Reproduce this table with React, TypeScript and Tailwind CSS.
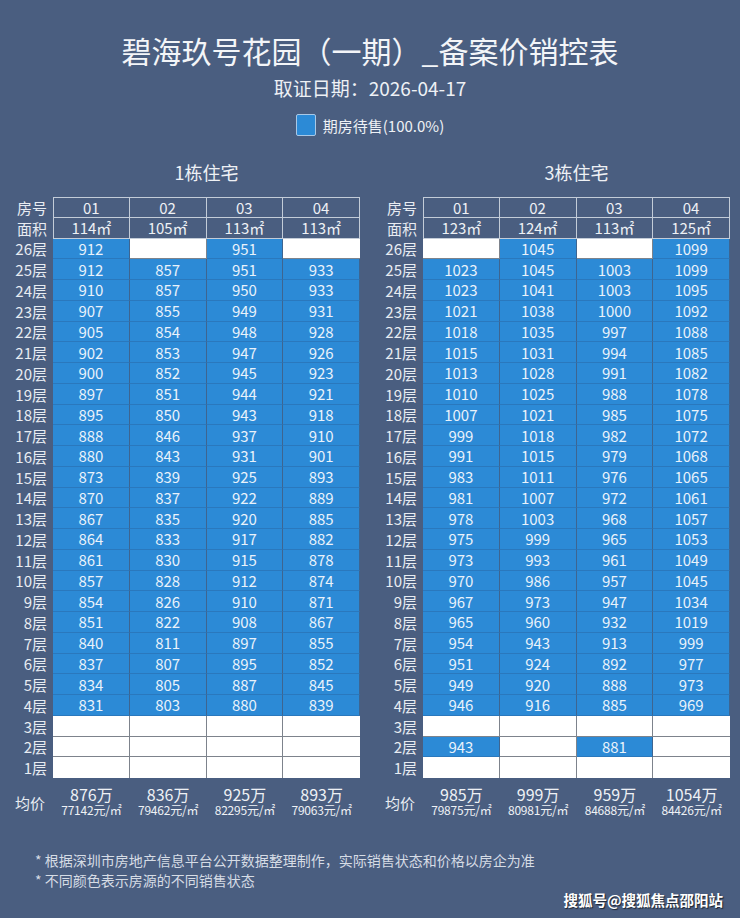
const leftRows = [
  "912,,951,",
  "912,857,951,933",
  "910,857,950,933",
  "907,855,949,931",
  "905,854,948,928",
  "902,853,947,926",
  "900,852,945,923",
  "897,851,944,921",
  "895,850,943,918",
  "888,846,937,910",
  "880,843,931,901",
  "873,839,925,893",
  "870,837,922,889",
  "867,835,920,885",
  "864,833,917,882",
  "861,830,915,878",
  "857,828,912,874",
  "854,826,910,871",
  "851,822,908,867",
  "840,811,897,855",
  "837,807,895,852",
  "834,805,887,845",
  "831,803,880,839",
  ",,,",
  ",,,",
  ",,,",
];

const rightRows = [
  ",1045,,1099",
  "1023,1045,1003,1099",
  "1023,1041,1003,1095",
  "1021,1038,1000,1092",
  "1018,1035,997,1088",
  "1015,1031,994,1085",
  "1013,1028,991,1082",
  "1010,1025,988,1078",
  "1007,1021,985,1075",
  "999,1018,982,1072",
  "991,1015,979,1068",
  "983,1011,976,1065",
  "981,1007,972,1061",
  "978,1003,968,1057",
  "975,999,965,1053",
  "973,993,961,1049",
  "970,986,957,1045",
  "967,973,947,1034",
  "965,960,932,1019",
  "954,943,913,999",
  "951,924,892,977",
  "949,920,888,973",
  "946,916,885,969",
  ",,,",
  "943,,881,",
  ",,,",
];

const buildings = [
  {
    name: "1栋住宅",
    areas: ["114㎡", "105㎡", "113㎡", "113㎡"],
    rows: leftRows,
    avg: [
      ["876万", "77142元/㎡"],
      ["836万", "79462元/㎡"],
      ["925万", "82295元/㎡"],
      ["893万", "79063元/㎡"],
    ],
  },
  {
    name: "3栋住宅",
    areas: ["123㎡", "124㎡", "113㎡", "125㎡"],
    rows: rightRows,
    avg: [
      ["985万", "79875元/㎡"],
      ["999万", "80981元/㎡"],
      ["959万", "84688元/㎡"],
      ["1054万", "84426元/㎡"],
    ],
  },
];

const Label = ({ text }: { text: string }) => (
  <div className="flex items-center justify-end pr-[6px] text-[15px] leading-none text-[#e8ecf2]">{text}</div>
);

const BuildingTable = ({ b }: { b: (typeof buildings)[number] }) => {
  return (
    <div className="w-[346px]">
      <div className="pl-[39px] text-center text-[18px] leading-[26px] text-[#eef1f5]">{b.name}</div>

      <div className="mt-[12px] grid grid-cols-[39px_repeat(4,1fr)] auto-rows-[20.75px]">
        <Label text="房号" />
        {["01", "02", "03", "04"].map((n, i) => (
          <div
            key={n}
            className={`flex items-center justify-center border-t border-r border-b border-[#c3ccd8] text-[15px] leading-none text-[#eef1f5] ${i === 0 ? "border-l" : ""}`}
          >
            {n}
          </div>
        ))}
        <Label text="面积" />
        {b.areas.map((a, i) => (
          <div
            key={i}
            className={`flex items-center justify-center border-r border-b border-[#c3ccd8] text-[15px] leading-none text-[#eef1f5] ${i === 0 ? "border-l" : ""}`}
          >
            {a}
          </div>
        ))}

        {b.rows.map((row, r) => {
          const floor = 26 - r;
          const cells = row.split(",");
          return [
            <Label key={`l${floor}`} text={`${floor}层`} />,
            ...cells.map((v, i) =>
              v ? (
                <div
                  key={`${floor}-${i}`}
                  className="flex items-center justify-center bg-[#2c8ad6] border-r border-b border-r-[#3e6590] border-b-[#2a78bd] text-[15px] leading-none text-[#e9f2fb]"
                >
                  {v}
                </div>
              ) : (
                <div
                  key={`${floor}-${i}`}
                  className={`bg-white ${i < 3 ? "border-r border-r-[#7d838c]" : ""} ${floor > 1 ? "border-b border-b-[#7d838c]" : ""}`}
                />
              )
            ),
          ];
        })}
      </div>

      <div className="mt-[9px] grid grid-cols-[39px_repeat(4,1fr)]">
        <div className="flex items-center justify-start pl-px pt-[3px] text-[15px] text-[#e8ecf2]">均价</div>
        {b.avg.map(([p, u], i) => (
          <div key={i} className="flex flex-col items-center text-[#eef1f5]">
            <span className="text-[16px] leading-[15px]">{p}</span>
            <span className="mt-px text-[12px] leading-[14px] tracking-[-0.2px]">{u}</span>
          </div>
        ))}
      </div>
    </div>
  );
};

export default function App() {
  return (
    <div className="w-[740px] h-[918px] overflow-hidden bg-[#4a5e80] font-['Noto_Sans_CJK_SC',sans-serif]">
      <h1 className="pt-[30px] text-center text-[30px] leading-[40px] font-normal text-[#f3f5f8]">
        碧海玖号花园（一期）_备案价销控表
      </h1>
      <div className="mt-[5px] text-center text-[19px] leading-[26px] text-[#eef1f5]">取证日期：2026-04-17</div>

      <div className="mt-[12px] flex h-[24px] items-center justify-center gap-[7px]">
        <span className="h-[22px] w-[20px] rounded-[2px] border border-[#a9c8e6] bg-[#2c8ad6]" />
        <span className="text-[15px] leading-none text-[#eef1f5]">期房待售(100.0%)</span>
      </div>

      <div className="mt-[22px] flex gap-[24px] pl-[14px]">
        {buildings.map((b) => (
          <BuildingTable key={b.name} b={b} />
        ))}
      </div>

      <div className="mt-[33px] pl-[35px] text-[14px] leading-[20px] text-[#d6dce5]">
        <p>* 根据深圳市房地产信息平台公开数据整理制作，实际销售状态和价格以房企为准</p>
        <p>* 不同颜色表示房源的不同销售状态</p>
      </div>

      <div className="flex justify-end pr-[17px] text-[14.5px] leading-[20px] font-bold text-white [text-shadow:1px_1px_1px_#1c2430]">
        搜狐号@搜狐焦点邵阳站
      </div>
    </div>
  );
}
